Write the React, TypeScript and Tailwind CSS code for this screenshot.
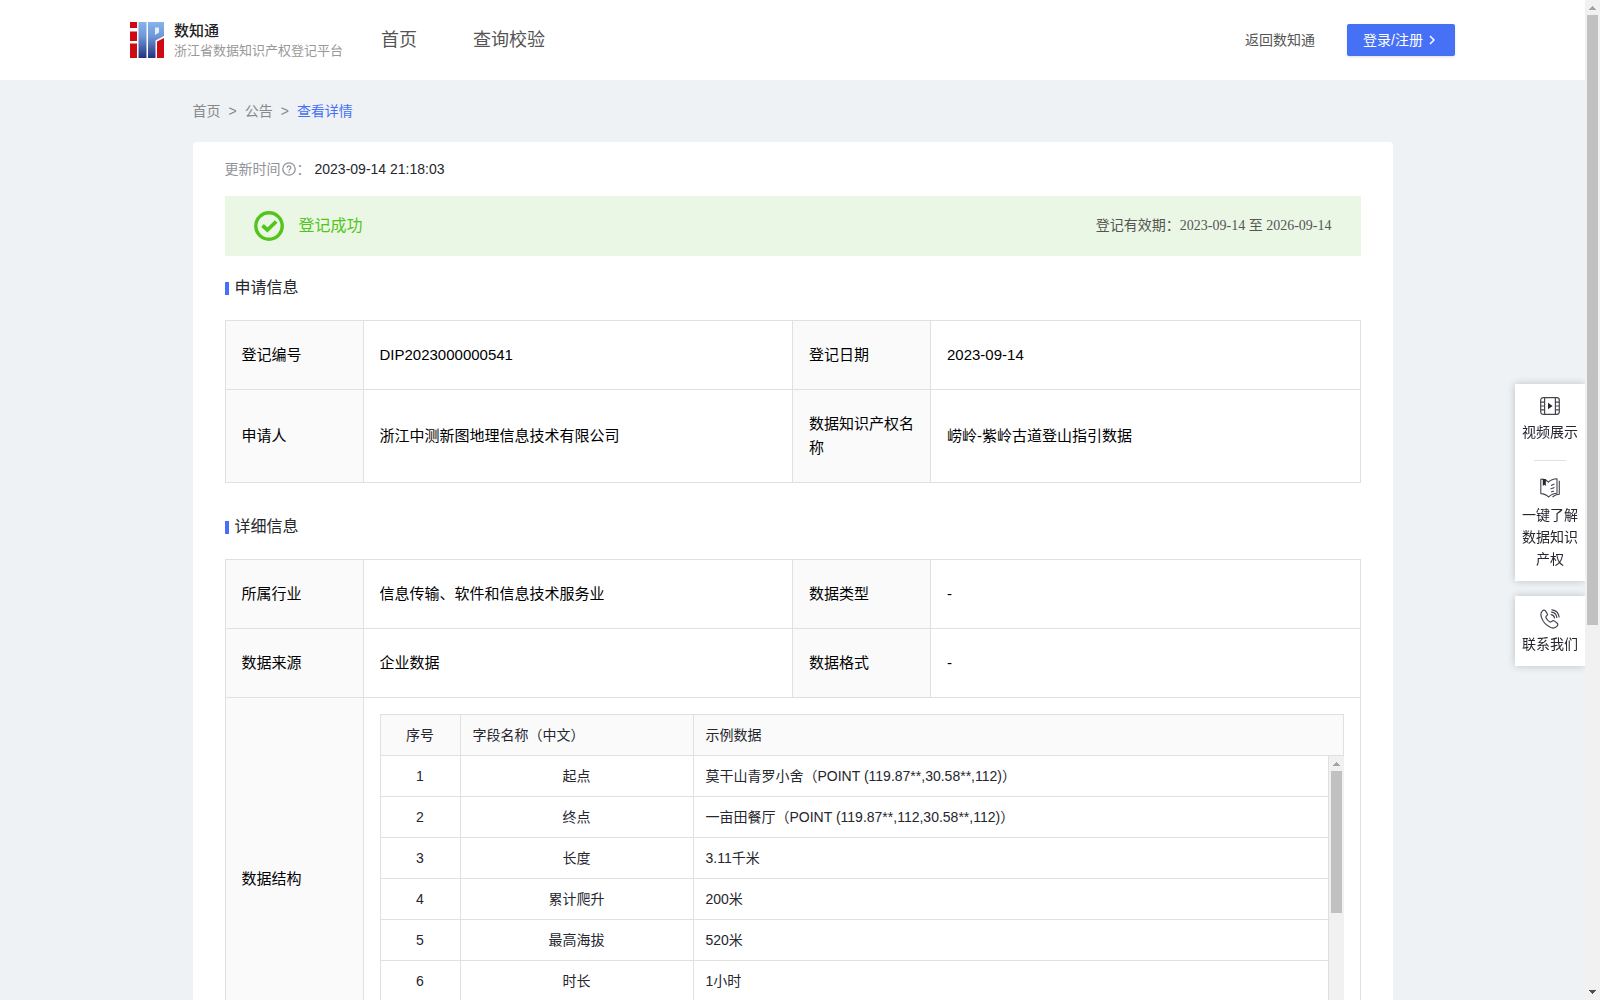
import React from "react";

const sans = "font-['Liberation_Sans','Noto_Sans_CJK_SC',sans-serif]";

function Logo() {
  return (
    <svg width="34" height="36" viewBox="0 0 34 36" aria-label="IP" role="img">
      <defs>
        <linearGradient id="logoBlue" x1="0" y1="0" x2="0" y2="36" gradientUnits="userSpaceOnUse">
          <stop offset="0" stopColor="#86b4ea" />
          <stop offset="0.4" stopColor="#6f97d8" />
          <stop offset="1" stopColor="#22327f" />
        </linearGradient>
      </defs>
      <path d="M0 0h7v6H0zM0 9.500h7V19H0zM0 21.500h7V36H0z" fill="#cf0a12" />
      <path d="M8.500 0h8v36h-8zM18 0h16v14l-8.500 4.500V36H18z" fill="url(#logoBlue)" />
      <path d="M25 5.500h4v5l-4 2.500z" fill="#e4eefa" />
      <path d="M34 16v20h-7V19.500z" fill="#cf0a12" />
    </svg>
  );
}

function SuccessIcon() {
  return (
    <svg width="30" height="30" viewBox="0 0 30 30" fill="none" stroke="#52c41a" aria-hidden="true">
      <circle cx="15" cy="15" r="13.2" strokeWidth="3.4" />
      <path d="M8.500 14.500l4.900 4.500 8.800-8.500" strokeWidth="3.800" />
    </svg>
  );
}

function HelpIcon() {
  return (
    <svg width="14" height="14" viewBox="0 0 14 14" fill="none" stroke="#909399" aria-hidden="true">
      <circle cx="7" cy="7" r="6.200" strokeWidth="1.300" />
      <path d="M5.200 5.700a1.800 1.800 0 1 1 2.700 1.500c-.6.35-.9.6-.9 1.300M7 9.600v1.100" strokeWidth="1.300" />
    </svg>
  );
}

function VideoIcon() {
  return (
    <svg width="20" height="18" viewBox="0 0 20 18" fill="none" stroke="#44464d" strokeWidth="1.2" aria-hidden="true">
      <rect x="0.7" y="0.7" width="18.6" height="16.6" rx="2.500" />
      <path d="M4.600 1v16M15.400 1v16M1 5.200h3.600M1 9h3.600M1 12.800h3.600M15.400 5.200H19M15.400 9H19M15.400 12.800H19" />
      <path d="M8 5.800v6.400L12.600 9z" fill="#25262e" stroke="none" />
    </svg>
  );
}

function BookIcon() {
  return (
    <svg width="20" height="20" viewBox="0 0 20 20" fill="none" stroke="#44464d" strokeWidth="1.1" strokeLinejoin="round" aria-hidden="true">
      <path d="M.8 1.200C3.800.8 6.500 2 8.500 4.200 10.600 2 13.500.9 17 .8v14.400c-3.300.1-6 1.400-8.500 3.800-2-2.200-4.600-3.300-7.700-3.400z" />
      <path d="M19.300 2.800v13.400c-2.800 0-5 .9-6.800 2.900" />
      <path d="M2.800 1h3v7L4.300 6.800 2.800 8z" fill="#25262e" stroke="none" />
      <path d="M11 7.500l3.500-1.500M10.500 11l4-1.500M11 14l3-1" />
    </svg>
  );
}

function PhoneIcon() {
  return (
    <svg width="20" height="20" viewBox="0 0 20 20" fill="none" stroke="#44464d" strokeWidth="1.200" strokeLinecap="round" strokeLinejoin="round" aria-hidden="true">
      <path d="M5.200 1.600c-1-1-2.300-.4-3 .5C.7 3.700.5 6 1.500 8.600c1.600 4.300 5 8 9.300 9.900 2.500 1 4.800.4 6.300-1.400.8-1 1-2 .1-2.900l-2.600-2.100c-.9-.7-1.800-.6-2.600.1-.8.8-1.500 1.100-2.400.6-1.700-1-2.900-2.400-3.600-4-.3-.7 0-1.400.7-2 .9-.8 1-1.700.4-2.500z" />
      <path d="M11.200 5.600c1.800.3 3 1.500 3.300 3.200M11.600 3.100c2.900.4 4.800 2.400 5.200 5.200M11.900 .8c4 .5 6.700 3.300 7.200 7.200" />
    </svg>
  );
}

function ScrollBar({ thumb, down }: { thumb: string; down?: boolean }) {
  return (
    <div className="flex w-[15px] shrink-0 flex-col items-center bg-[#f1f1f1]" aria-hidden="true">
      <svg width="7" height="15" viewBox="0 0 7 15" fill="#a3a3a3" className="shrink-0">
        <path d="M3 6h1v1h1v1h1v1h1v1H0V9h1V8h1V7h1z" />
      </svg>
      <div className={`w-[11px] shrink-0 bg-[#c1c1c1] ${thumb}`} />
      {down && (
        <svg width="7" height="15" viewBox="0 0 7 15" fill="#505050" className="mt-auto shrink-0">
          <path d="M0 5h7v1H6v1H5v1H4v1H3V8H2V7H1V6H0z" />
        </svg>
      )}
    </div>
  );
}

const label = "h-17 bg-[#fafafa] border border-[#e0e0e0] px-4 py-[22px] text-left font-normal align-middle break-all";
const value = "border border-[#e0e0e0] px-4 py-[22px] align-middle";

function SectionTitle({ children }: { children: React.ReactNode }) {
  return (
    <h2 className="flex items-center gap-1.5 text-base leading-6 text-[#25262e]">
      <span className="h-[13px] w-1 bg-[#4670f5]" />
      {children}
    </h2>
  );
}

function Columns() {
  return (
    <colgroup>
      <col className="w-[138px]" />
      <col />
      <col className="w-[138px]" />
      <col />
    </colgroup>
  );
}

function FieldColumns() {
  return (
    <colgroup>
      <col className="w-[81px]" />
      <col className="w-[233px]" />
      <col />
    </colgroup>
  );
}

const fields = [
  ["起点", "莫干山青罗小舍（POINT (119.87**,30.58**,112)）"],
  ["终点", "一亩田餐厅（POINT (119.87**,112,30.58**,112)）"],
  ["长度", "3.11千米"],
  ["累计爬升", "200米"],
  ["最高海拔", "520米"],
  ["时长", "1小时"],
];

function FieldTable() {
  return (
    <div className="text-sm leading-5 text-[#25262e]">
      <table className="w-full table-fixed border-separate border-spacing-0">
        <FieldColumns />
        <thead>
          <tr className="h-[42px] bg-[#fafafa]">
            <th className="border border-[#e0e0e0] text-center font-normal">序号</th>
            <th className="border-y border-r border-[#e0e0e0] pl-3 text-left font-normal">字段名称（中文）</th>
            <th className="border-y border-r border-[#e0e0e0] pl-3 text-left font-normal">示例数据</th>
          </tr>
        </thead>
      </table>
      <div className="flex h-[287px]">
        <div className="min-w-0 flex-1 overflow-y-auto">
          <table className="w-full table-fixed border-separate border-spacing-0">
            <FieldColumns />
            <tbody>
              {fields.map(([name, sample], i) => (
                <tr key={name} className="h-[41px]">
                  <td className="border-x border-b border-[#e0e0e0] text-center">{i + 1}</td>
                  <td className="border-r border-b border-[#e0e0e0] text-center">{name}</td>
                  <td className="border-r border-b border-[#e0e0e0] pl-3">{sample}</td>
                </tr>
              ))}
            </tbody>
          </table>
        </div>
        <ScrollBar thumb="h-[142px]" />
      </div>
    </div>
  );
}

export default function App() {
  return (
    <div className={`flex h-screen bg-[#eef2f5] text-black ${sans}`}>
      <div className="min-w-0 flex-1 overflow-y-auto">
        <header className="flex h-20 items-center bg-white px-[130px]">
          <a href="#" className="flex items-center gap-2.5">
            <Logo />
            <span className="flex flex-col font-['Noto_Sans_CJK_SC',sans-serif]">
              <span className="text-[15px] leading-5 font-medium text-[#222]">数知通</span>
              <span className="text-[13px] leading-5 text-[#999]">浙江省数据知识产权登记平台</span>
            </span>
          </a>
          <nav className="ml-[38px] flex gap-14 text-lg text-[#555]">
            <a href="#">首页</a>
            <a href="#">查询校验</a>
          </nav>
          <a href="#" className="ml-auto text-sm text-[#555]">返回数知通</a>
          <button className="ml-8 flex h-8 w-[108px] items-center rounded-xs bg-[#4670f5] pl-4 text-sm text-white shadow-sm">
            登录/注册
            <svg className="ml-1.5" width="6" height="10" viewBox="0 0 6 10" fill="none" stroke="#fff" strokeWidth="1.500" aria-hidden="true">
              <path d="M1 1l4 4-4 4" />
            </svg>
          </button>
        </header>

        <main className="mx-auto w-full max-w-[1200px]">
          <nav className="flex h-[62px] items-center gap-2 text-sm text-[#888]">
            <a href="#">首页</a>
            <span>&gt;</span>
            <a href="#">公告</a>
            <span>&gt;</span>
            <a href="#" className="text-[#4670f5]">查看详情</a>
          </nav>

          <section className="rounded-sm bg-white px-8 pt-4 pb-8">
            <div className="flex h-[22px] items-center gap-1 text-sm">
              <span className="flex items-center text-[#909399]">更新时间<span className="mx-px"><HelpIcon /></span>：</span>
              <span className="text-[#25262e]">2023-09-14 21:18:03</span>
            </div>

            <div className="mt-4 flex h-[60px] items-center bg-[#eaf7e5] px-[29px]">
              <SuccessIcon />
              <span className="ml-[15px] text-base text-[#52c41a]">登记成功</span>
              <span className="ml-auto font-['Liberation_Serif','Noto_Sans_CJK_SC',serif] text-sm text-[#555]">
                登记有效期：2023-09-14 至 2026-09-14
              </span>
            </div>

            <div className="mt-5">
              <SectionTitle>申请信息</SectionTitle>
            </div>
            <table className="mt-5 w-full table-fixed border-collapse text-[15px] leading-6">
              <Columns />
              <tbody>
                <tr>
                  <th className={label}>登记编号</th>
                  <td className={value}>DIP2023000000541</td>
                  <th className={label}>登记日期</th>
                  <td className={value}>2023-09-14</td>
                </tr>
                <tr>
                  <th className={label}>申请人</th>
                  <td className={value}>浙江中测新图地理信息技术有限公司</td>
                  <th className={label}>数据知识产权名称</th>
                  <td className={value}>崂岭-紫岭古道登山指引数据</td>
                </tr>
              </tbody>
            </table>

            <div className="mt-8">
              <SectionTitle>详细信息</SectionTitle>
            </div>
            <table className="mt-5 w-full table-fixed border-collapse text-[15px] leading-6">
              <Columns />
              <tbody>
                <tr>
                  <th className={label}>所属行业</th>
                  <td className={value}>信息传输、软件和信息技术服务业</td>
                  <th className={label}>数据类型</th>
                  <td className={value}>-</td>
                </tr>
                <tr>
                  <th className={label}>数据来源</th>
                  <td className={value}>企业数据</td>
                  <th className={label}>数据格式</th>
                  <td className={value}>-</td>
                </tr>
                <tr>
                  <th className={label}>数据结构</th>
                  <td colSpan={3} className="border border-[#e0e0e0] p-4">
                    <FieldTable />
                  </td>
                </tr>
              </tbody>
            </table>
          </section>
        </main>
      </div>

      <aside className="fixed top-96 right-[15px] flex w-[70px] flex-col gap-[15px] text-center text-sm leading-[22px] text-[#25262e]">
        <div className="flex flex-col items-center bg-white px-1.5 pt-[13px] pb-[11px] shadow-[0_0_8px_rgba(0,0,0,0.2)]">
          <a href="#" className="flex flex-col items-center gap-1.5"><VideoIcon />视频展示</a>
          <span className="my-[17px] h-px w-8 bg-[#dcdfe6]" />
          <a href="#" className="flex flex-col items-center gap-1.5"><BookIcon />一键了解数据知识产权</a>
        </div>
        <div className="bg-white px-1.5 pt-[13px] pb-[11px] shadow-[0_0_8px_rgba(0,0,0,0.2)]">
          <a href="#" className="flex flex-col items-center gap-1"><PhoneIcon />联系我们</a>
        </div>
      </aside>

      <div className="relative flex">
        <ScrollBar thumb="h-[61%]" down />
      </div>
    </div>
  );
}
